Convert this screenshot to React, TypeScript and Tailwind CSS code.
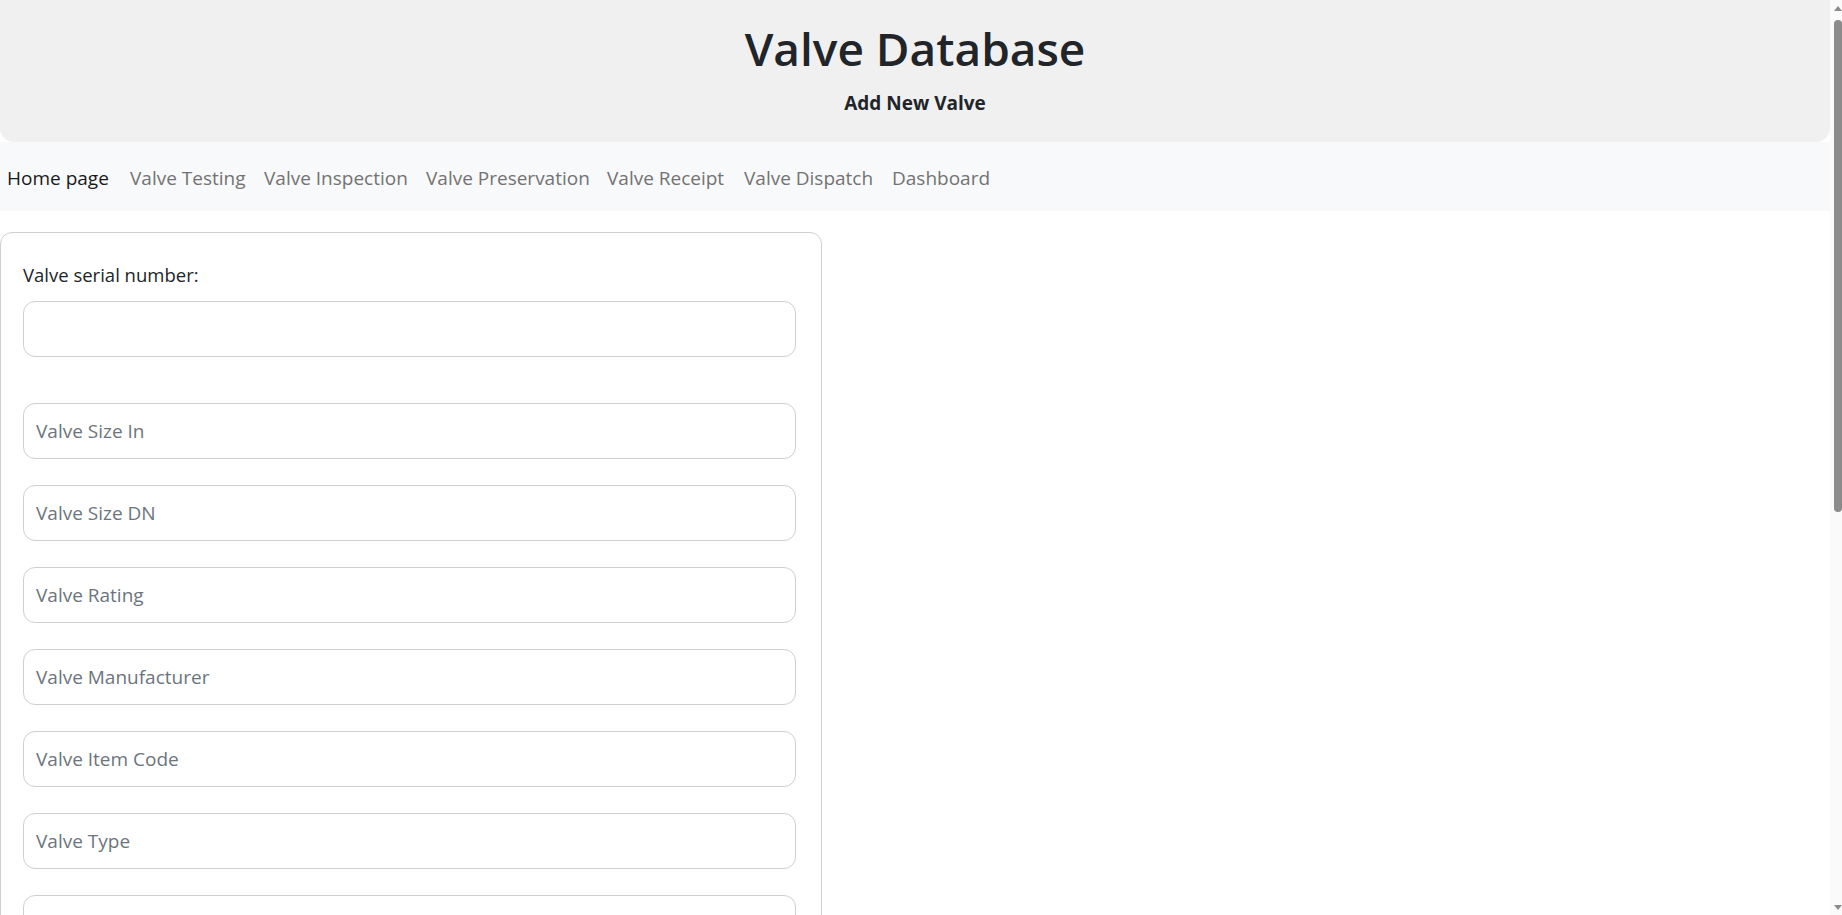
import React from "react";

const navItems = [
  { label: "Home page", w: "w-[123px]", active: true },
  { label: "Valve Testing", w: "w-[134px]", active: false },
  { label: "Valve Inspection", w: "w-[162px]", active: false },
  { label: "Valve Preservation", w: "w-[181px]", active: false },
  { label: "Valve Receipt", w: "w-[137px]", active: false },
  { label: "Valve Dispatch", w: "w-[148px]", active: false },
  { label: "Dashboard", w: "w-auto", active: false },
];

const fields = [
  "Valve Size In",
  "Valve Size DN",
  "Valve Rating",
  "Valve Manufacturer",
  "Valve Item Code",
  "Valve Type",
  "Valve Body Material",
  "Valve Trim Material",
  "Valve End Connection",
  "Valve Operator",
  "Valve Location",
  "Valve Project",
  "Valve PO Number",
  "Valve Remarks",
];

function Scrollbar() {
  return (
    <aside className="flex h-screen w-[12px] shrink-0 flex-col items-end bg-[#fafafa]">
      <div className="flex h-[16px] w-[8px] items-center justify-center">
        <div className="h-0 w-0 border-x-[4px] border-b-[5px] border-x-transparent border-b-[#8b8b8b]" />
      </div>
      <div className="mt-[4px] h-[492px] w-[8px] rounded-[4px] bg-[#8b8b8b]" />
      <div className="flex-1" />
      <div className="flex h-[16px] w-[8px] items-center justify-center">
        <div className="h-0 w-0 border-x-[4px] border-t-[5px] border-x-transparent border-t-[#8b8b8b]" />
      </div>
    </aside>
  );
}

export default function App() {
  return (
    <div className="flex h-screen overflow-hidden bg-white text-[#212529] [font-family:'Open_Sans','Noto_Sans',sans-serif]">
      <div className="h-screen min-w-0 flex-1 overflow-hidden">
        <header className="flex h-[142px] flex-col items-center rounded-b-[14px] bg-[#f0f0f0] pt-[19px]">
          <h1 className="text-[46px] leading-[58px] font-semibold text-[#212529]">
            Valve Database
          </h1>
          <h2 className="mt-[14px] text-[19px] leading-[24px] font-bold text-[#212529]">
            Add New Valve
          </h2>
        </header>

        <nav className="flex h-[69px] items-start bg-[#f8f9fa] pt-[24px] pl-[7px]">
          {navItems.map((item) => (
            <a
              key={item.label}
              href="#"
              className={`${item.w} shrink-0 text-[19px] leading-[24px] ${
                item.active ? "text-[#1a1a1a]" : "text-[#737373]"
              }`}
            >
              {item.label}
            </a>
          ))}
        </nav>

        <main className="pb-[18px]">
          <form className="mt-[21px] w-[822px] rounded-[12px] border border-[#cfcfcf] pt-[28px] pr-[25px] pb-[24px] pl-[22px]">
            <label className="block text-[18.5px] leading-[27px] text-[#212529]">
              Valve serial number:
            </label>
            <input
              type="text"
              className="mt-[13px] block h-[56px] w-full rounded-[12px] border border-[#cfcfcf] px-[12px] text-[19px] outline-none"
            />
            <div className="mt-[46px] flex flex-col gap-[26px]">
              {fields.map((f) => (
                <input
                  key={f}
                  type="text"
                  placeholder={f}
                  className="block h-[56px] w-full rounded-[12px] border border-[#cfcfcf] px-[12px] text-[19px] text-[#212529] outline-none placeholder:text-[#6c757d]"
                />
              ))}
            </div>
            <button
              type="button"
              className="mt-[26px] h-[48px] rounded-[8px] bg-[#0d6efd] px-[20px] text-[18px] text-white"
            >
              Submit
            </button>
          </form>
        </main>
      </div>
      <Scrollbar />
    </div>
  );
}
